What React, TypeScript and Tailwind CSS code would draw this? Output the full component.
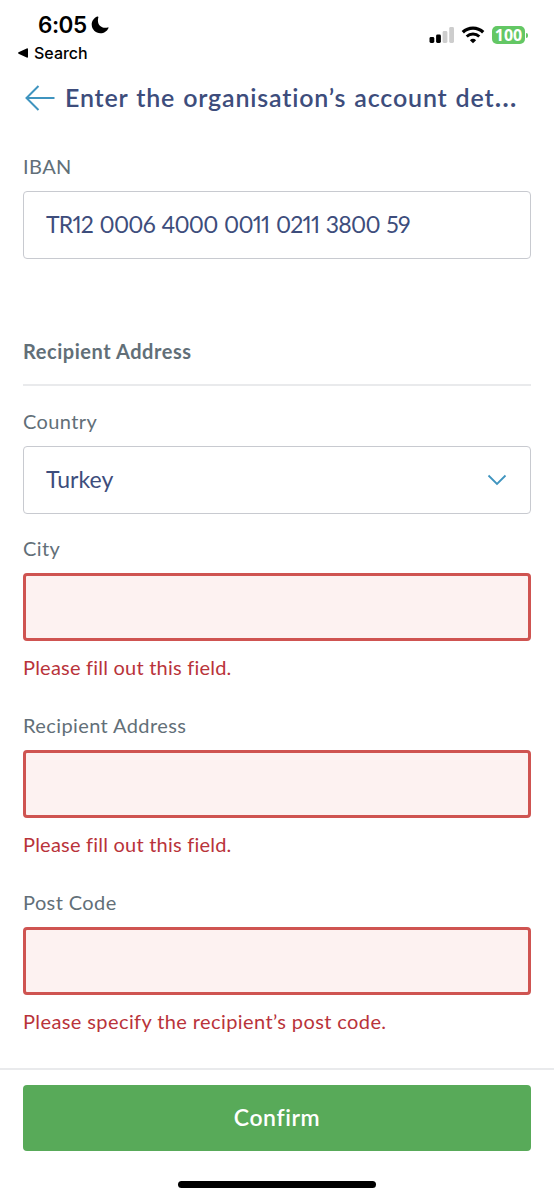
import type { ReactNode } from "react";

function StatusBar() {
  return (
    <div className="flex h-[70px] justify-between font-['Inter','Liberation_Sans',sans-serif] text-black">
      <div className="pl-[18px] pt-[12px]">
        <div className="flex h-[26px] items-center gap-[4px] pl-[20px]">
          <span className="text-[22.5px] font-semibold leading-[26px] tracking-[-0.5px]">6:05</span>
          <svg width="18" height="18" viewBox="0 0 18 18" className="shrink-0">
            <path d="M6.3.5C3 1.8.7 4.9.7 8.6c0 4.8 3.9 8.7 8.7 8.7 3.7 0 6.8-2.2 8.1-5.3.2-.5-.2-.8-.7-.6-.8.3-1.700.4-2.600.4-4.300 0-7.300-3.100-7.300-7.300 0-1.200.2-2.300.5-3.300.1-.5-.4-.9-1.100-.7Z" fill="#000" />
          </svg>
        </div>
        <div className="flex h-[26px] items-center gap-[6px] pt-[3px]">
          <svg width="10" height="10" viewBox="0 0 10 10" className="shrink-0">
            <path d="M.5 4.300 8.700.4Q10 0 10 1.200V8.800Q10 10 8.700 9.600L.5 5.700Q-.2 5 .5 4.300Z" fill="#000" />
          </svg>
          <span className="text-[16px] font-medium leading-[20px]">Search</span>
        </div>
      </div>
      <div className="flex h-[44px] items-end pr-[26px]">
        <svg width="26" height="18" viewBox="0 0 26 18" className="shrink-0">
          <rect x="0.500" y="11" width="4.800" height="6" rx="1.400" fill="#000" />
          <rect x="7.100" y="8.500" width="4.800" height="8.500" rx="1.400" fill="#000" />
          <rect x="13.600" y="5" width="4.800" height="12" rx="1.400" fill="#cdcdcd" />
          <rect x="20.200" y="1" width="4.800" height="16" rx="1.400" fill="#cdcdcd" />
        </svg>
        <svg width="24" height="18" viewBox="0 0 24 18" className="ml-[6px] shrink-0">
          <path d="M1.800 6.300a14.800 14.800 0 0 1 20.400 0" fill="none" stroke="#000" strokeWidth="3.300" />
          <path d="M5.700 10.500a9.200 9.200 0 0 1 12.600 0" fill="none" stroke="#000" strokeWidth="3" />
          <path d="M12 17.300 8.900 14.200a4.600 4.600 0 0 1 6.200 0Z" fill="#000" />
        </svg>
        <div className="ml-[7px] flex items-center">
          <div className="flex h-[18px] w-[33px] items-center justify-center rounded-[5px] bg-[#63c764] font-['Open_Sans',sans-serif] text-[16px] font-bold leading-[18px] text-white">
            100
          </div>
          <div className="ml-[1px] h-[5px] w-[2px] rounded-r-full bg-[#63c764]" />
        </div>
      </div>
    </div>
  );
}

function Label({ children }: { children: ReactNode }) {
  return <div className="h-[36px] text-[20px] leading-[22px] tracking-[0.4px] text-[#626f78]">{children}</div>;
}

function ErrorField({ label, message, messageClass }: { label: string; message: string; messageClass: string }) {
  return (
    <div className="h-[177px] shrink-0">
      <Label>{label}</Label>
      <div className="h-[68px] rounded-[4px] border-[3px] border-[#cf5451] bg-[#fdf2f1]" />
      <div className={`mt-[15px] text-[20px] leading-[22px] text-[#b9333a] ${messageClass}`}>{message}</div>
    </div>
  );
}

export default function App() {
  return (
    <div className="flex h-[1200px] w-[554px] flex-col overflow-hidden bg-white font-['Lato',sans-serif]">
      <StatusBar />
      <header className="flex h-[56px] items-center pl-[25px]">
        <svg width="30" height="26" viewBox="0 0 30 26" className="shrink-0">
          <path d="M13.500 1 1.500 13l12 12M1.500 13H29.500" fill="none" stroke="#3f94bf" strokeWidth="2" />
        </svg>
        <h1 className="ml-[10px] pb-[2px] whitespace-nowrap text-[25px] font-semibold leading-[32px] tracking-[0.83px] [word-spacing:1px] text-[#3d4d7c]">
          Enter the organisation’s account det<span className="text-[29px] leading-none">…</span>
        </h1>
      </header>
      <main className="flex h-[942px] flex-col px-[23px] pt-[29px]">
        <Label>IBAN</Label>
        <div className="flex h-[68px] items-center rounded-[4px] border-[1.500px] border-[#c8cad0] pb-[1px] pl-[22px] text-[23px] proportional-nums tracking-[-0.75px] [word-spacing:1.3px] text-[#3d4d7c]">
          TR12 0006 4000 0011 0211 3800 59
        </div>
        <h2 className="mt-[81px] h-[44px] text-[20px] font-bold leading-[23px] tracking-[0.55px] text-[#626f78]">
          Recipient Address
        </h2>
        <div className="mb-[24px] h-[2px] shrink-0 bg-[#e9eaec]" />
        <div className="h-[127px] shrink-0">
          <Label>Country</Label>
          <div className="flex h-[68px] items-center justify-between rounded-[4px] border-[1.500px] border-[#c8cad0] pr-[23px] pb-[1px] pl-[22px] text-[23px] tracking-[0.05px] text-[#3d4d7c]">
            Turkey
            <svg width="20" height="12" viewBox="0 0 20 12">
              <path d="M1.500 1.500 10 10l8.500-8.500" fill="none" stroke="#3f94bf" strokeWidth="1.800" />
            </svg>
          </div>
        </div>
        <ErrorField label="City" message="Please fill out this field." messageClass="tracking-[0.22px]" />
        <ErrorField label="Recipient Address" message="Please fill out this field." messageClass="tracking-[0.22px]" />
        <ErrorField label="Post Code" message="Please specify the recipient’s post code." messageClass="tracking-[0.4px]" />
      </main>
      <footer className="flex h-[132px] flex-col items-center border-t-2 border-[#e9eaec] px-[23px] pt-[15px]">
        <button className="h-[66px] w-full rounded-[4px] bg-[#58aa59] pb-[2px] text-[23px] font-semibold tracking-[0.6px] text-white">
          Confirm
        </button>
        <div className="mt-[30px] h-[7px] w-[198px] rounded-full bg-black" />
      </footer>
    </div>
  );
}
